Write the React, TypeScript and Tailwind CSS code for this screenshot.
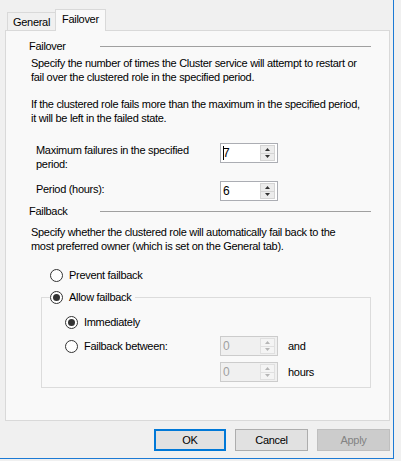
import React from 'react';

function Radio({ checked }: { checked?: boolean }) {
  return (
    <span className="flex h-[13px] w-[13px] shrink-0 items-center justify-center rounded-full border border-[#333333] bg-white">
      {checked && <span className="h-[7px] w-[7px] rounded-full bg-[#333333]" />}
    </span>
  );
}

function Spin({ value, disabled, caret }: { value: string; disabled?: boolean; caret?: boolean }) {
  const arrow = disabled ? '#b5b5b5' : '#333333';
  return (
    <div
      className={`flex h-[20px] w-[58px] shrink-0 items-center justify-between border pl-[2px] pr-[2px] ${
        disabled ? 'border-[#cccccc] bg-[#f0f0f0] text-[#a0a0a0]' : 'border-[#abadb3] bg-white text-black'
      }`}
    >
      <span className="flex items-center text-[12px] leading-[14px]">
        {caret && <span className="mr-[-1px] h-[14px] w-px bg-black" />}
        {value}
      </span>
      <div className="flex h-[16px] w-[15px] flex-col">
        <div className={`flex flex-1 items-center justify-center border ${disabled ? 'border-[#e0e0e0] bg-[#f4f4f4]' : 'border-[#d4d4d4] bg-[#ececec]'}`}>
          <svg width="5" height="3" viewBox="0 0 5 3">
            <path d="M0 3 L2.5 0 L5 3 Z" fill={arrow} />
          </svg>
        </div>
        <div className={`flex flex-1 items-center justify-center border border-t-0 ${disabled ? 'border-[#e0e0e0] bg-[#f4f4f4]' : 'border-[#d4d4d4] bg-[#ececec]'}`}>
          <svg width="5" height="3" viewBox="0 0 5 3">
            <path d="M0 0 L2.5 3 L5 0 Z" fill={arrow} />
          </svg>
        </div>
      </div>
    </div>
  );
}

function Header({ label }: { label: string }) {
  return (
    <div className="flex items-center leading-[14px]">
      <span className="w-[71px]">{label}</span>
      <span className="h-px flex-1 bg-[#a0a0a0]" />
    </div>
  );
}

export default function App() {
  return (
    <div
      className="flex h-[461px] w-[401px] whitespace-nowrap bg-[#f0f0f0] text-[11px] tracking-[-0.3px] text-black"
      style={{ fontFamily: '"Liberation Sans", Arial, sans-serif' }}
    >
      <div className="flex h-[459px] w-[394px] shrink-0 flex-col border-b border-r border-[#1c7ad4] pl-[5px] pt-[9px]">
        {/* tabs */}
        <div className="flex h-[21px] shrink-0 items-end pl-[2px]">
          <div className="flex h-[18px] items-center border-l border-t border-[#d9d9d9] px-[5px] leading-[14px]">
            General
          </div>
          <div className="relative z-10 mb-[-1px] flex h-[22px] items-center border-x border-t border-[#d9d9d9] bg-[#f9f9f9] px-[6px] pb-[3px] leading-[14px]">
            Failover
          </div>
        </div>

        {/* page */}
        <div className="flex h-[391px] w-[385px] shrink-0 flex-col overflow-hidden border border-[#d9d9d9] bg-[#f9f9f9] pl-[23px] pr-[18px] pt-[8px]">
          <Header label="Failover" />
          <p className="ml-[2px] mt-[3px] leading-[14px]">
            Specify the number of times the Cluster service will attempt to restart or
            <br />
            fail over the clustered role in the specified period.
          </p>
          <p className="ml-[2px] mt-[13px] leading-[14px]">
            If the clustered role fails more than the maximum in the specified period,
            <br />
            it will be left in the failed state.
          </p>

          <div className="ml-[7px] mt-[18px] flex items-start">
            <span className="w-[184px] leading-[14px]">
              Maximum failures in the specified
              <br />
              period:
            </span>
            <Spin value="7" caret />
          </div>
          <div className="ml-[7px] mt-[10px] flex items-start">
            <span className="w-[184px] pt-[1px] leading-[14px]">Period (hours):</span>
            <Spin value="6" />
          </div>

          <div className="mt-[3px]">
            <Header label="Failback" />
          </div>
          <p className="ml-[2px] mt-[7px] leading-[14px]">
            Specify whether the clustered role will automatically fail back to the
            <br />
            most preferred owner (which is set on the General tab).
          </p>

          <div className="ml-[21px] mt-[15px] flex items-center gap-[6px] leading-[14px]">
            <Radio />
            <span>Prevent failback</span>
          </div>

          <fieldset className="ml-[12px] mt-[8px] w-[330px] border border-[#dcdcdc] px-[8px] pb-[5px]">
            <legend className="flex items-center gap-[6px] pr-[4px] leading-[14px]">
              <Radio checked />
              <span>Allow failback</span>
            </legend>
            <div className="ml-[15px] mt-[11px] flex items-center gap-[6px] leading-[14px]">
              <Radio checked />
              <span>Immediately</span>
            </div>
            <div className="ml-[15px] mt-[7px] flex items-center">
              <div className="flex w-[155px] items-center gap-[6px] leading-[14px]">
                <Radio />
                <span>Failback between:</span>
              </div>
              <Spin value="0" disabled />
              <span className="ml-[10px] leading-[14px]">and</span>
            </div>
            <div className="ml-[170px] mt-[6px] flex items-center">
              <Spin value="0" disabled />
              <span className="ml-[10px] leading-[14px]">hours</span>
            </div>
          </fieldset>
        </div>

        {/* buttons */}
        <div className="mt-[8px] flex justify-end gap-[9px] pr-[3px]">
          <button className="h-[22px] w-[72px] border-2 border-[#0078d7] bg-[#e1e1e1] leading-[14px]">OK</button>
          <button className="h-[22px] w-[73px] border border-[#adadad] bg-[#e1e1e1] leading-[14px]">Cancel</button>
          <button className="h-[22px] w-[73px] border border-[#bfbfbf] bg-[#cccccc] leading-[14px] text-[#838383]">
            Apply
          </button>
        </div>
      </div>
    </div>
  );
}
